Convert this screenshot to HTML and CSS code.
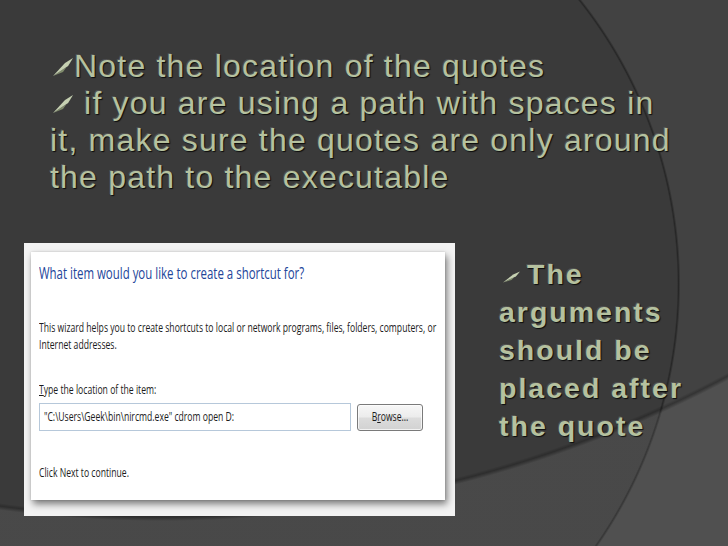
FILE: index.html
```html
<!DOCTYPE html>
<html>
<head>
<meta charset="utf-8">
<link rel="stylesheet" href="styles.css">
</head>
<body>
<div class="slide">
  <div class="top">
    <div class="line"><svg class="bul" viewBox="0 0 20 20" preserveAspectRatio="none"><polygon class="dk" points="0,19 15,9 20,1 10,15"/><polygon class="lt" points="0,19 12,6 20,1 15,9"/></svg>Note the location of the quotes</div>
    <div class="line"><svg class="bul" viewBox="0 0 20 20" preserveAspectRatio="none"><polygon class="dk" points="0,19 15,9 20,1 10,15"/><polygon class="lt" points="0,19 12,6 20,1 15,9"/></svg> if you are using a path with spaces in<br>it, make sure the quotes are only around<br>the path to the executable</div>
  </div>
  <div class="row">
    <div class="frame">
      <div class="panel">
        <div class="title sq">What item would you like to create a shortcut for?</div>
        <div class="desc sq">This wizard helps you to create shortcuts to local or network programs, files, folders, computers, or<br>Internet addresses.</div>
        <div class="label sq"><u>T</u>ype the location of the item:</div>
        <div class="inputrow">
          <div class="input"><div class="sq">"C:\Users\Geek\bin\nircmd.exe" cdrom open D:</div></div>
          <div class="btn"><div class="sq center">B<u>r</u>owse...</div></div>
        </div>
        <div class="next sq">Click Next to continue.</div>
      </div>
    </div>
    <div class="rt"><svg class="bul2" viewBox="0 0 20 20" preserveAspectRatio="none"><polygon class="dk" points="0,19 15,9 20,1 10,15"/><polygon class="lt" points="0,19 12,6 20,1 15,9"/></svg>The<br>arguments<br>should be<br>placed after<br>the quote</div>
  </div>
</div>
</body>
</html>
```
FILE: styles.css
```css
html, body {
  margin: 0;
  padding: 0;
  background: #3a3a3a;
}
.slide {
  width: 728px;
  height: 546px;
  overflow: hidden;
  background-color: #3a3a3a;
  background-image:
    radial-gradient(circle 1207px at 162px -689px, rgba(0,0,0,0) 1203px, rgba(0,0,0,0.22) 1206px, rgba(255,255,255,0.075) 1210px),
    radial-gradient(circle 457px at 222px 284px, rgba(0,0,0,0) 455px, rgba(0,0,0,0.35) 456.5px, rgba(255,255,255,0.045) 458.5px);
  font-family: "Liberation Sans", Arial, sans-serif;
}
.top {
  padding: 48px 0 0 50px;
  font-size: 32px;
  line-height: 37px;
  letter-spacing: 1.2px;
  color: #b5c19f;
  text-shadow: 1px 1px 1px rgba(0,0,0,0.8), -1px -1px 0 rgba(255,255,255,0.12);
  white-space: nowrap;
}
.bul {
  width: 20px;
  height: 20px;
  margin: 0 1px 0 3px;
  vertical-align: 0;
}
.lt { fill: #c6d1b2; }
.dk { fill: #7f8b6b; }
.row {
  display: flex;
  align-items: flex-start;
  margin-top: 47px;
}
.frame {
  margin-left: 24px;
  width: 431px;
  height: 273px;
  box-sizing: border-box;
  padding: 9px 10px 0 7px;
  background: #f3f3f3;
  flex: none;
}
.panel {
  height: 248px;
  box-sizing: border-box;
  padding: 11px 0 0 8px;
  background: #ffffff;
  box-shadow: 2px 4px 7px rgba(0,0,0,0.5), 0 0 2px rgba(0,0,0,0.15);
  font-family: "Open Sans", "Noto Sans", sans-serif;
  color: #1c1c1c;
}
.sq {
  transform: scaleX(0.69);
  transform-origin: 0 0;
  white-space: nowrap;
}
.sq.center {
  transform-origin: 50% 0;
  text-align: center;
}
.title {
  font-size: 16.6px;
  line-height: 20px;
  color: #23459a;
}
.desc {
  margin-top: 37px;
  font-size: 12.5px;
  line-height: 16.5px;
}
.label {
  margin-top: 29px;
  font-size: 12.5px;
  line-height: 16.5px;
}
.inputrow {
  display: flex;
  align-items: flex-start;
  margin-top: 4.5px;
}
.input {
  width: 312px;
  height: 28px;
  box-sizing: border-box;
  border: 1px solid #b6c8da;
  padding: 1px 0 0 4px;
  font-size: 12.5px;
  line-height: 24px;
}
.btn {
  margin: 1px 0 0 6px;
  width: 66px;
  height: 27px;
  box-sizing: border-box;
  border: 1px solid #7a7a7a;
  border-radius: 3px;
  background: linear-gradient(#f7f7f7 0%, #ececec 48%, #dcdcdc 52%, #d2d2d2 100%);
  box-shadow: inset 0 0 0 1px rgba(255,255,255,0.7);
  font-size: 12.5px;
  line-height: 24px;
}
.next {
  margin-top: 34px;
  font-size: 12.5px;
  line-height: 16.5px;
}
.rt {
  margin: 11.7px 0 0 44px;
  font-size: 28.5px;
  line-height: 38px;
  font-weight: bold;
  letter-spacing: 2px;
  color: #b5c19f;
  text-shadow: 1px 1px 1px rgba(0,0,0,0.8), -1px -1px 0 rgba(255,255,255,0.12);
  white-space: nowrap;
}
.bul2 {
  width: 17px;
  height: 12px;
  margin: 0 7px 0 4px;
  vertical-align: 1px;
}
```
